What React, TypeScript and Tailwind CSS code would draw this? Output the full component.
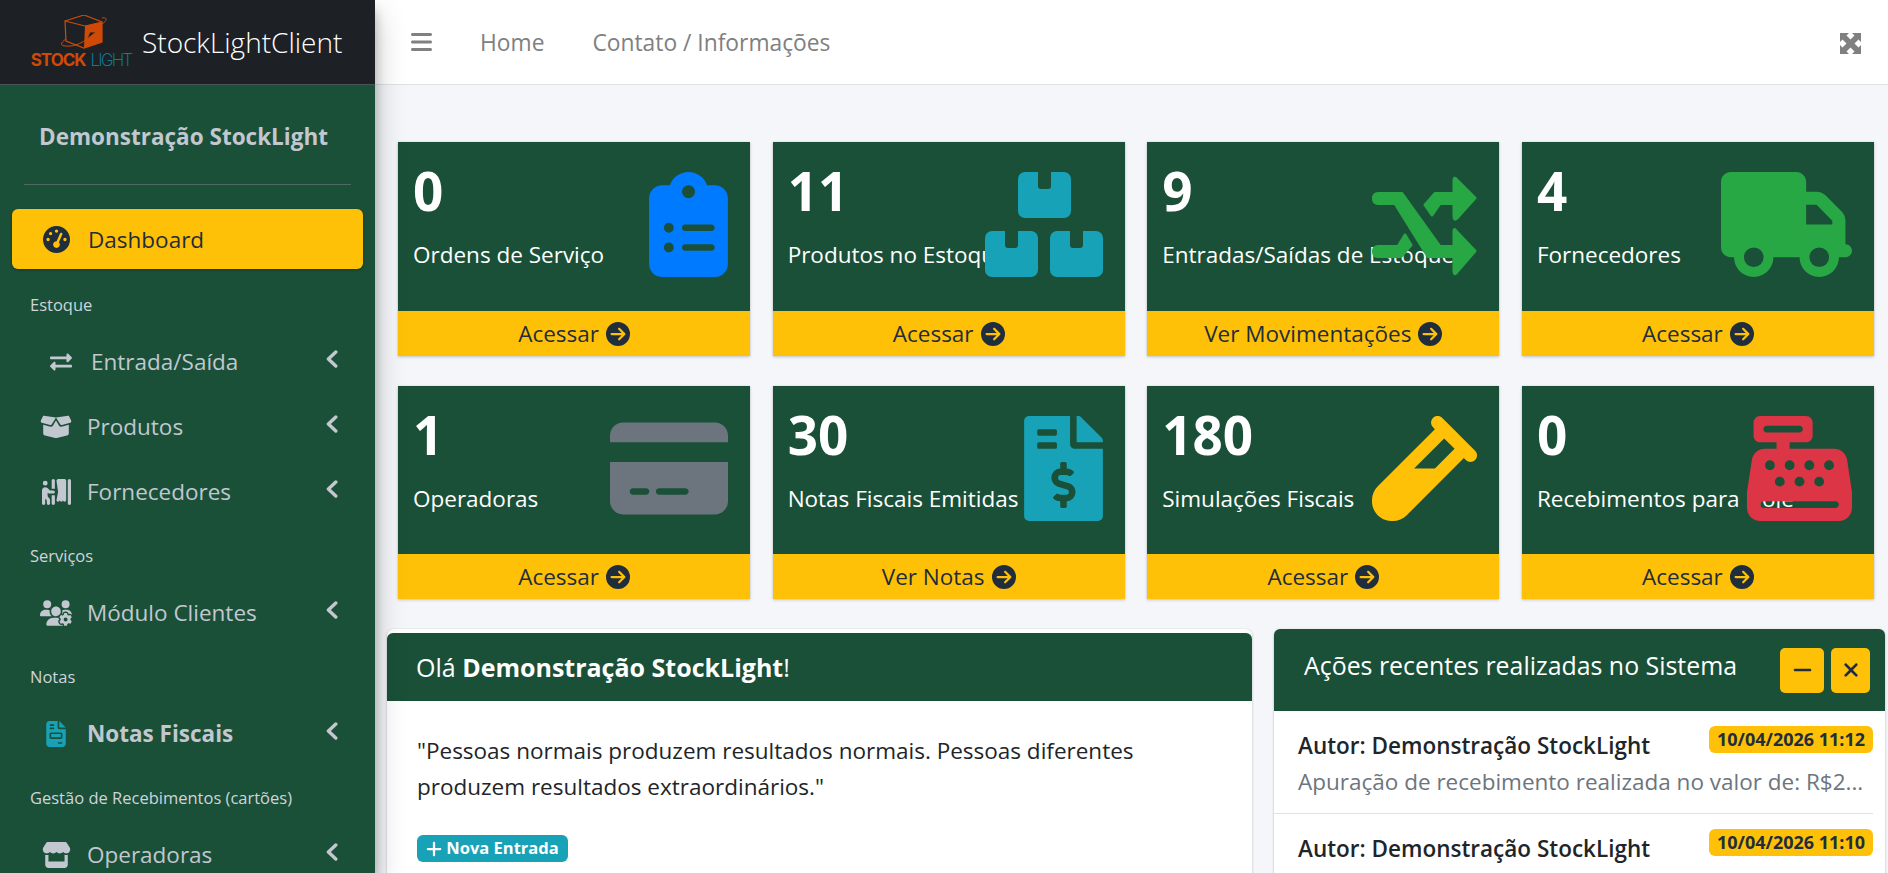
import React from "react";
import {
  FaClipboardList, FaTruck, FaCreditCard, FaVial, FaCashRegister,
  FaCircleArrowRight, FaBars, FaPlus, FaMinus, FaXmark, FaBoxOpen, FaPersonBooth, FaUsersGear, FaFileInvoice, FaStore, FaGaugeHigh,
} from "react-icons/fa6";
import { FaExchangeAlt, FaFileInvoiceDollar } from "react-icons/fa";

function Boxes({ className }: { className?: string }) {
  const box = (x: number, y: number) =>
    `M${x + 7} ${y}h13v14a3 3 0 0 0 3 3h7a3 3 0 0 0 3-3v-14h13a7 7 0 0 1 7 7v32a7 7 0 0 1-7 7h-39a7 7 0 0 1-7-7v-32a7 7 0 0 1 7-7z`;
  return (
    <svg viewBox="0 0 118 105" fill="currentColor" className={className}>
      <path d={box(33, 0)} />
      <path d={box(0, 59)} />
      <path d={box(65, 59)} />
    </svg>
  );
}

function Shuffle({ className }: { className?: string }) {
  return (
    <svg viewBox="0 0 105 105" fill="currentColor" stroke="currentColor" strokeWidth="3" strokeLinejoin="round" className={className}>
      <path d="M6 21.5 H30 L68 74.5 H82 V59 Q82 56 84 59 L103 79 L84 101 Q82 103 82 99 V84.5 H56 L23 31.5 H6 Q1.5 31.5 1.5 26.5 Q1.5 21.5 6 21.5 Z" />
      <path d="M82 9 Q82 4 85 8 L103 26 L85 46 Q82 49 82 44 V31.5 H68 L60 43 L53 33 L63 21.5 H82 Z" />
      <path d="M6 74.5 H26 L33 63 L39 73 L29 84.5 H6 Q1.5 84.5 1.5 79.5 Q1.5 74.5 6 74.5 Z" />
    </svg>
  );
}

function Expand({ className }: { className?: string }) {
  return (
    <svg viewBox="0 0 21 21" fill="currentColor" className={className}>
      <path d="M0 0H9L6.5 2.5L10.5 6.5L14.5 2.5L12 0H21V9L18.5 6.5L14.5 10.5L18.5 14.5L21 12V21H12L14.5 18.5L10.5 14.5L6.5 18.5L9 21H0V12L2.5 14.5L6.5 10.5L2.5 6.5L0 9Z" />
    </svg>
  );
}

function Chevron() {
  return (
    <svg width="12" height="18" viewBox="0 0 12 18" fill="none" stroke="currentColor" strokeWidth="3.4" strokeLinejoin="round" strokeLinecap="round" className="-mt-[6px] shrink-0">
      <path d="M9.8 2 L2.4 9 L9.8 16" />
    </svg>
  );
}

const cards = [
  { n: "0", label: "Ordens de Serviço", link: "Acessar", Icon: FaClipboardList, icon: "w-[79px] text-[#007bff]" },
  { n: "11", label: "Produtos no Estoque", link: "Acessar", Icon: Boxes, icon: "w-[118px] text-[#17a2b8]" },
  { n: "9", label: "Entradas/Saídas de Estoque", link: "Ver Movimentações", Icon: Shuffle, icon: "w-[105px] text-[#28a745]" },
  { n: "4", label: "Fornecedores", link: "Acessar", Icon: FaTruck, icon: "w-[131px] text-[#28a745]" },
  { n: "1", label: "Operadoras", link: "Acessar", Icon: FaCreditCard, icon: "w-[118px] text-[#6c757d]" },
  { n: "30", label: "Notas Fiscais Emitidas", link: "Ver Notas", Icon: FaFileInvoiceDollar, icon: "w-[79px] text-[#17a2b8]" },
  { n: "180", label: "Simulações Fiscais", link: "Acessar", Icon: FaVial, icon: "w-[105px] text-[#ffc107]" },
  { n: "0", label: "Recebimentos para Hoje", link: "Acessar", Icon: FaCashRegister, icon: "w-[105px] text-[#dc3545]" },
];

function Logo() {
  return (
    <div className="ml-[31px] flex w-[100px] flex-col items-center">
      <svg width="48" height="36" viewBox="0 0 48 36" className="-mt-[1px] ml-[6px]" fill="none">
        <path d="M5 6 L24 0 L42 7 L42 27 L24 33 L6 26 Z" stroke="#cf4a06" strokeWidth="1.2" />
        <path d="M5 6 L25 11 L42 7" stroke="#cf4a06" strokeWidth="1.2" />
        <path d="M25 11 L42 7 L42 27 L24 33 Z" fill="#cf4a06" />
        <path d="M42 3 C47 2 48 5 42 9 M6 24 C0 28 0 31 6 31 C14 32 24 28 36 17" stroke="#cf4a06" strokeWidth="1" />
        <path d="M27 24 L36 17 L30 17 Z" fill="#1d2126" stroke="#cf4a06" strokeWidth="0.8" />
      </svg>
      <div className="mt-[1px] flex items-center font-['Inter',sans-serif] text-[17px] leading-[16px]">
        <span className="font-bold tracking-[-1px] text-[#cf4a06]">STOCK</span>
        <span className="ml-[5px] font-extralight tracking-[-1.8px] text-[#0a8db0]">LIGHT</span>
      </div>
    </div>
  );
}

function Section({ children, className }: { children: React.ReactNode; className: string }) {
  return <div className={"pl-[30px] text-[16.5px] leading-[25px] text-[#d0d4db] " + className}>{children}</div>;
}

function NavItem({ icon, label, bold, small }: { icon: React.ReactNode; label: string; bold?: boolean; small?: boolean }) {
  return (
    <div className="flex h-[65px] items-center pl-[40px] pr-[37px] text-[#c2c7d0]">
      <span className="flex w-[32px] shrink-0 justify-center">{icon}</span>
      <span className={bold ? "ml-[15px] flex-1 text-[22.5px] font-bold" : small ? "ml-[19px] flex-1 text-[22.5px]" : "ml-[15px] flex-1 text-[22.5px]"}>{label}</span>
      <Chevron />
    </div>
  );
}

function Sidebar() {
  return (
    <aside className="relative z-10 w-[375px] shrink-0 bg-[#1a5038] shadow-[0_14px_28px_rgba(0,0,0,0.25),0_10px_10px_rgba(0,0,0,0.22)]">
      <div className="flex h-[85px] items-center border-b border-[#4b545c] bg-[#1d2126]">
        <Logo />
        <span className="ml-[11px] text-[28px] font-light text-white">StockLightClient</span>
      </div>
      <div className="mx-[24px] flex h-[100px] items-center justify-center border-b border-[#4f6a62] pr-[8px] pt-[4px] text-[22.5px] font-bold text-[#c2c7d0]">
        Demonstração StockLight
      </div>
      <div className="mx-[12px] mt-[24px] flex h-[60px] items-center rounded-[6px] bg-[#ffc107] pl-[31px] text-[22.5px] text-[#1f2d3d] shadow-[0_1px_3px_rgba(0,0,0,0.3)]">
        <FaGaugeHigh className="h-[27px] w-[27px]" />
        <span className="ml-[18px] mt-[2px]">Dashboard</span>
      </div>
      <Section className="mt-[23px]">Estoque</Section>
      <div className="mt-[12px]">
        <NavItem small icon={<FaExchangeAlt className="ml-[10px] h-[26px] w-[26px]" />} label="Entrada/Saída" />
        <NavItem icon={<FaBoxOpen className="h-[26px] w-[32px]" />} label="Produtos" />
        <NavItem icon={<FaPersonBooth className="h-[26px] w-[29px]" />} label="Fornecedores" />
      </div>
      <Section className="mt-[19px]">Serviços</Section>
      <div className="mt-[12px]">
        <NavItem icon={<FaUsersGear className="h-[26px] w-[32px]" />} label="Módulo Clientes" />
      </div>
      <Section className="mt-[19px]">Notas</Section>
      <div className="mt-[12px]">
        <NavItem bold icon={<FaFileInvoice className="h-[26px] w-[20px] text-[#17a2b8]" />} label="Notas Fiscais" />
      </div>
      <Section className="mt-[19px]">Gestão de Recebimentos (cartões)</Section>
      <div className="mt-[12px]">
        <NavItem icon={<FaStore className="h-[26px] w-[29px]" />} label="Operadoras" />
      </div>
    </aside>
  );
}

function Navbar() {
  return (
    <div className="flex h-[85px] shrink-0 items-center border-b border-[#dee2e6] bg-white text-[22.8px] text-[#808080]">
      <FaBars className="ml-[36px] h-[24px] w-[21px]" />
      <span className="ml-[48px] mt-[2px]">Home</span>
      <span className="ml-[48px] mt-[2px]">Contato / Informações</span>
      <Expand className="ml-auto mr-[27px] mt-[2px] h-[21px] w-[21px]" />
    </div>
  );
}

function StatCard({ c }: { c: (typeof cards)[number] }) {
  const { Icon } = c;
  return (
    <div className="relative flex h-[213.5px] flex-col shadow-[0_0_1px_rgba(0,0,0,0.125),0_1px_3px_rgba(0,0,0,0.2)]">
      <div className="flex-1 overflow-hidden bg-[#1a5038] pl-[15px] text-white">
        <div className="mt-[9px] text-[53px] font-bold leading-[80px]">{c.n}</div>
        <div className="mt-[6px] whitespace-nowrap text-[22.5px] leading-[36px]">{c.label}</div>
      </div>
      <Icon className={"absolute right-[22px] top-[30px] h-[105px] " + c.icon} />
      <div className="flex h-[45px] items-center justify-center gap-[7px] bg-[#ffc107] pt-[1px] text-[22.5px] text-[#1f2d3d]">
        <span>{c.link}</span>
        <FaCircleArrowRight className="h-[24px] w-[24px]" />
      </div>
    </div>
  );
}

function Item({ time, desc }: { time: string; desc?: string }) {
  return (
    <div className="ml-0 mr-[12px] border-b border-[#dee2e6] pb-[13px] pl-[24px] pt-[15px]">
      <div className="flex items-start justify-between">
        <span className="mt-[2px] text-[22.5px] font-semibold leading-[36px] text-[#212529]">Autor: Demonstração StockLight</span>
        <span className="flex h-[27px] w-[164px] items-center justify-center rounded-[6px] bg-[#ffc107] text-[18px] font-bold text-[#1f2d3d]">{time}</span>
      </div>
      {desc && <div className="whitespace-nowrap text-[22.5px] leading-[36px] text-[#6c757d]">{desc}</div>}
    </div>
  );
}

export default function App() {
  return (
    <div className="flex h-[873px] w-[1888px] overflow-hidden bg-[#f4f6f9] font-['Open_Sans',sans-serif]">
      <Sidebar />
      <main className="flex min-w-0 flex-1 flex-col">
        <Navbar />
        <div className="pl-[23px] pr-[14px] pt-[57px]">
          <div className="grid grid-cols-4 gap-x-[22.5px] gap-y-[30px]">
            {cards.map((c, i) => <StatCard key={i} c={c} />)}
          </div>
          <div className="-ml-[11px] -mr-[11px] mt-[30px] flex gap-[22px]">
            <section className="w-[865px] shrink-0 rounded-t-[6px] bg-white pt-[4px] shadow-[0_0_1px_rgba(0,0,0,0.125),0_1px_3px_rgba(0,0,0,0.2)]">
              <div className="flex h-[68px] items-center rounded-t-[6px] bg-[#1a5038] px-[29px] pt-[2px] text-[25px] text-white">
                <span>Olá <b className="font-bold">Demonstração StockLight</b>!</span>
              </div>
              <div className="px-[30px] pt-[32px]">
                <p className="text-[22.5px] leading-[36px] text-[#212529]">"Pessoas normais produzem resultados normais. Pessoas diferentes<br />produzem resultados extraordinários."</p>
                <span className="mt-[30px] inline-flex h-[27px] w-[151px] items-center justify-center gap-[4px] rounded-[6px] bg-[#17a2b8] text-[16.5px] font-bold text-white">
                  <FaPlus className="h-[18px] w-[16px]" /> Nova Entrada
                </span>
              </div>
            </section>
            <section className="w-[611px] shrink-0 rounded-t-[6px] bg-white shadow-[0_0_1px_rgba(0,0,0,0.125),0_1px_3px_rgba(0,0,0,0.2)]">
              <div className="flex h-[82px] items-center justify-between rounded-t-[6px] bg-[#1a5038] pl-[30px] pr-[15px]">
                <span className="-mt-[9px] text-[24.9px] text-white">Ações recentes realizadas no Sistema</span>
                <div className="flex gap-[7px]">
                  <span className="flex h-[45px] w-[44px] items-center justify-center rounded-[5px] bg-[#ffc107] text-[#1f2d3d]"><FaMinus className="h-[22px] w-[19px]" /></span>
                  <span className="flex h-[45px] w-[39px] items-center justify-center rounded-[5px] bg-[#ffc107] text-[#1f2d3d]"><FaXmark className="h-[22px] w-[16px]" /></span>
                </div>
              </div>
              <Item time="10/04/2026 11:12" desc="Apuração de recebimento realizada no valor de: R$2..." />
              <Item time="10/04/2026 11:10" />
            </section>
          </div>
        </div>
      </main>
    </div>
  );
}
